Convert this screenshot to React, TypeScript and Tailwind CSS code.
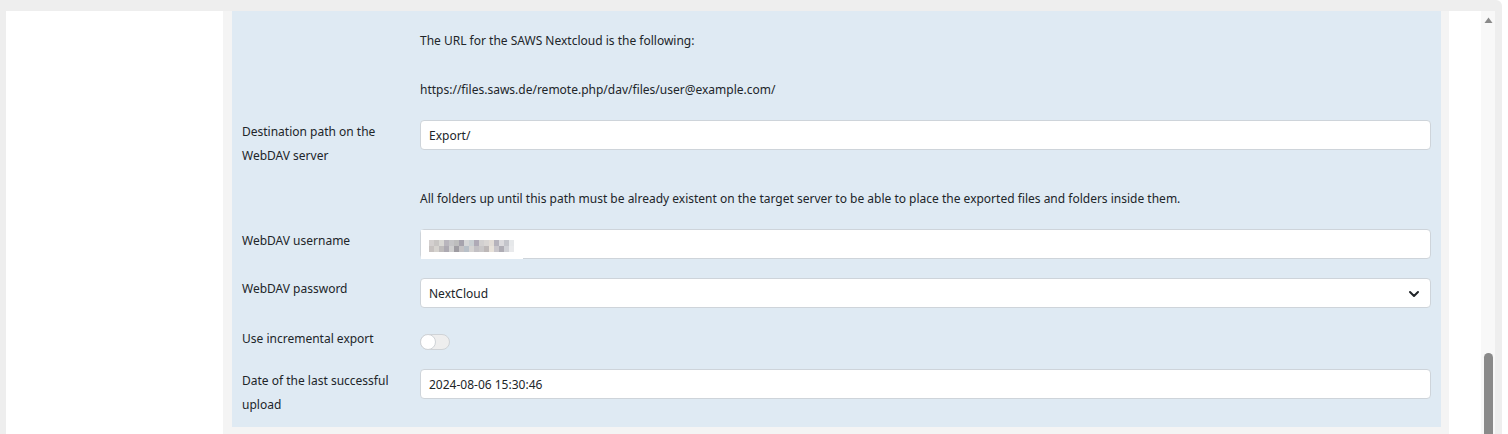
import { ChevronDown } from "lucide-react";

const font = { fontFamily: '"Noto Sans", "Open Sans", sans-serif' };

// pixelated (censored) username picture
const mosaic = [
  ["#d4d0cf", "#c9c6c4", "#d9d8d4", "#b9b6bd", "#c4c4c6", "#bdbdbd", "#a6a3ad", "#d5d6d7", "#c9cfd2", "#afaab6", "#d2d0d0", "#d9d6d4", "#e2dcd6", "#b6b3bc", "#dbdadd", "#c4c5cb", "#e6e8ea"],
  ["#c7c2c0", "#d6d3cf", "#bfbcbc", "#adaab2", "#cfcfcf", "#9e9ca2", "#c4c2c4", "#b8c0c8", "#d5d3d2", "#c2c0c4", "#c9c7c8", "#bdb8b8", "#e8e2da", "#c9c6cb", "#aeacb4", "#d0d1d6", "#e9eaec"],
];

const inputCls =
  "h-[30px] w-full rounded-[4px] border border-[#ced4da] bg-white px-2 pt-[1px] text-[12px] text-[#212529] flex items-center";

function Row({
  label,
  children,
  className = "",
}: {
  label?: React.ReactNode;
  children: React.ReactNode;
  className?: string;
}) {
  return (
    <div className={`flex items-start ${className}`}>
      <div className="w-[178px] shrink-0 text-[12px] leading-6 text-[#212529] translate-y-[1px]">{label}</div>
      <div className="flex-1">{children}</div>
    </div>
  );
}

function Note({ children }: { children: React.ReactNode }) {
  return <div className="text-[12px] leading-6 text-[#212529] translate-y-[1px]">{children}</div>;
}

export default function App() {
  return (
    <div className="w-[1508px] h-[434px] bg-white overflow-hidden" style={font}>
      <div className="w-[1502px] h-[434px] bg-[#eeeeee] rounded-tr-[6px] pt-[11px] pl-[6px] pr-[7px] flex">
        {/* sidebar */}
        <div className="w-[217px] bg-white" />

        {/* main */}
        <div className="w-[1226px] bg-[#f4f4f4] pl-[9px] pr-[8px]">
          <div className="bg-[#dfeaf3] px-[10px] pt-[17px] pb-[11px] flex flex-col">
            <Row>
              <Note>The URL for the SAWS Nextcloud is the following:</Note>
            </Row>
            <Row className="mt-[25px]">
              <Note>https://files.saws.de/remote.php/dav/files/user@example.com/</Note>
            </Row>
            <Row
              className="mt-[18px]"
              label={
                <>
                  Destination path on the
                  <br />
                  WebDAV server
                </>
              }
            >
              <div className={`${inputCls} mt-[1px]`}>Export/</div>
            </Row>
            <Row className="mt-[19px]">
              <Note>
                All folders up until this path must be already existent on the target server to be able to place the exported files and folders inside them.
              </Note>
            </Row>
            <Row className="mt-[18px]" label="WebDAV username">
              <div className={`${inputCls} mt-[1px] relative`}>
                <div className="absolute left-0 top-0 h-[29px] w-[102px] bg-white pl-[8px] pt-[10px]">
                  <div className="flex flex-col">
                    {mosaic.map((r, i) => (
                      <div key={i} className="flex">
                        {r.map((c, j) => (
                          <div key={j} className="w-[5px] h-[6px]" style={{ backgroundColor: c }} />
                        ))}
                      </div>
                    ))}
                  </div>
                </div>
              </div>
            </Row>
            <Row className="mt-[17px]" label="WebDAV password">
              <div className={`${inputCls} mt-[2px] justify-between pr-[8px]`}>
                <span>NextCloud</span>
                <ChevronDown className="w-4 h-4 text-[#212529]" strokeWidth={3} />
              </div>
            </Row>
            <Row className="mt-[18px]" label="Use incremental export">
              <div className="mt-[8px] w-[30px] h-[16px] rounded-full bg-[#eeeeee] border border-[#cfd3d7] relative">
                <div className="absolute left-[-1px] top-[-1px] w-[16px] h-[16px] rounded-full bg-white border border-[#cfd3d7]" />
              </div>
            </Row>
            <Row
              className="mt-[18px]"
              label={
                <>
                  Date of the last successful
                  <br />
                  upload
                </>
              }
            >
              <div className={`${inputCls} mt-[1px]`}>2024-08-06 15:30:46</div>
            </Row>
          </div>
        </div>

        {/* right margin */}
        <div className="w-[32px] bg-white" />

        {/* scrollbar */}
        <div className="w-[14px] bg-[#f8f8f8] relative">
          <svg className="absolute left-[3px] top-[6px]" width="9" height="7" viewBox="0 0 9 7">
            <path d="M4.5 0.5 L8.5 6 L0.5 6 Z" fill="#8a8a8a" />
          </svg>
          <div className="absolute left-[3px] top-[342px] w-[9px] h-[100px] rounded-t-full bg-[#8a8a8a]" />
        </div>
      </div>
    </div>
  );
}
